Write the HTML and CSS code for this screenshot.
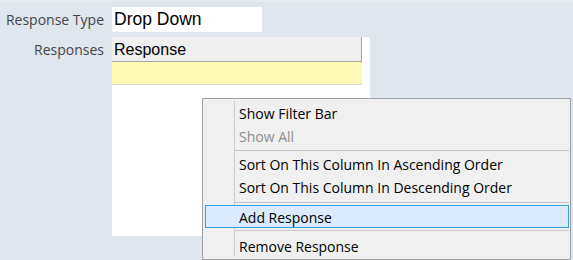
FILE: index.html
```html
<!DOCTYPE html>
<html>
<head>
<meta charset="utf-8">
<link rel="stylesheet" href="styles.css">
</head>
<body>
<div class="page">
  <div class="form">
    <div class="lbl">Response Type</div>
    <div class="input">Drop Down</div>
    <div class="lbl lbl-top">Responses</div>
    <div class="grid">
      <div class="grid-head">Response</div>
      <div class="grid-row"></div>
    </div>
  </div>
  <div class="menu">
    <div class="item">Show Filter Bar</div>
    <div class="item disabled">Show All</div>
    <div class="sep sep-a"></div>
    <div class="item">Sort On This Column In Ascending Order</div>
    <div class="item">Sort On This Column In Descending Order</div>
    <div class="sep sep-b"></div>
    <div class="item hot">Add Response</div>
    <div class="sep sep-c"></div>
    <div class="item">Remove Response</div>
  </div>
</div>
</body>
</html>
```
FILE: styles.css
```css
html, body {
  margin: 0;
  padding: 0;
}
body {
  background: #dfe6ee;
  width: 573px;
  height: 260px;
  overflow: hidden;
}
.page {
  position: relative;
  width: 573px;
  height: 260px;
  box-sizing: border-box;
  border-top: 2px solid #e7ecf2;
}
.form {
  display: grid;
  grid-template-columns: 104px auto;
  column-gap: 8px;
  row-gap: 5px;
  padding-top: 5px;
  justify-items: start;
}
.lbl {
  justify-self: end;
  font-family: "Open Sans", "Noto Sans", sans-serif;
  font-size: 14px;
  color: #454545;
  line-height: 25px;
  white-space: nowrap;
}
.lbl-top {
  align-self: start;
}
.input {
  width: 150px;
  height: 25px;
  box-sizing: border-box;
  background: #ffffff;
  padding-left: 2px;
  font-family: "Liberation Sans", Arial, sans-serif;
  font-size: 17.5px;
  line-height: 25px;
  color: #000;
}
.grid {
  width: 258px;
  height: 199px;
  background: #ffffff;
}
.grid-head {
  width: 250px;
  height: 25px;
  box-sizing: border-box;
  background: #efefef;
  border-right: 1px solid #a4a4a4;
  border-bottom: 1px solid #a4a4a4;
  padding: 1px 0 0 2px;
  font-family: "Liberation Sans", Arial, sans-serif;
  font-size: 16px;
  line-height: 23px;
  color: #000;
}
.grid-row {
  width: 250px;
  height: 23px;
  box-sizing: border-box;
  background: #fffbb5;
  border-bottom: 1px solid #d3dbe5;
}
.menu {
  position: absolute;
  left: 202px;
  top: 96px;
  width: 369px;
  height: 162px;
  box-sizing: border-box;
  background: #f0f0f0;
  border: 1px solid #a0a0a0;
  padding: 2px 1px 2px 2px;
  font-family: "Open Sans", "Noto Sans", sans-serif;
  font-size: 14px;
  color: #000;
}
.menu::before {
  content: "";
  position: absolute;
  left: 31px;
  top: 2px;
  bottom: 2px;
  width: 1px;
  background: #cdcdcd;
}
.item {
  position: relative;
  height: 23px;
  box-sizing: border-box;
  border: 1px solid transparent;
  padding: 3px 0 0 33px;
  line-height: 18px;
  white-space: nowrap;
}
.item.disabled {
  color: #8c8c8c;
}
.item.hot {
  background: #dbeafc;
  border-color: #34a0de;
}
.sep {
  height: 1px;
  background: #c6c6c6;
  margin-left: 30px;
}
.sep-a { margin-top: 3px; margin-bottom: 1px; }
.sep-b { margin-top: 4px; margin-bottom: 2px; }
.sep-c { margin-top: 2px; margin-bottom: 3px; }
```
